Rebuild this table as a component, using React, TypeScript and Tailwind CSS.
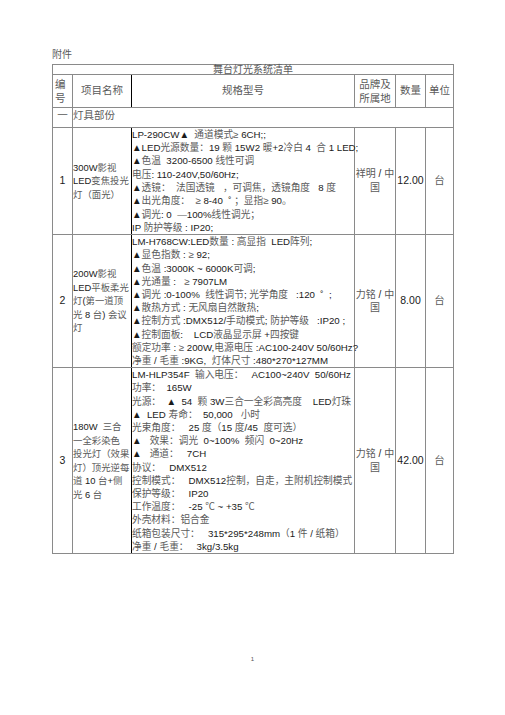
import React from "react";

const GRAY = /([\u2014\u2265\u2103\u3000-\u303f\u4e00-\u9fff\uff00-\uffef]+)/;

// CJK runs render lighter than the latin ones in the scan
function Txt({ s }: { s: string }) {
  return (
    <>
      {s.split(GRAY).map((part, i) =>
        GRAY.test(part) ? (
          <span key={i} className="text-[#5a5a5a]">
            {part}
          </span>
        ) : (
          <span key={i}>{part}</span>
        )
      )}
    </>
  );
}

function Lines({ lines }: { lines: string[] }) {
  return (
    <>
      {lines.map((l, i) => (
        <div key={i} className="whitespace-pre">
          <Txt s={l} />
        </div>
      ))}
    </>
  );
}

const rows = [
  {
    no: "1",
    name: ["300W影视", "LED变焦投光", "灯（面光）"],
    spec: [
      "LP-290CW▲  通道模式≥ 6CH;;",
      "▲LED光源数量：19 颗 15W2 暖+2冷白 4  合 1 LED;",
      "▲色温  3200-6500 线性可调",
      "电压: 110-240V,50/60Hz;",
      "▲透镜：  法国透镜   ，可调焦，透镜角度   8 度",
      "▲出光角度：  ≥ 8-40  ˚ ；显指≥ 90。",
      "▲调光: 0  —100%线性调光；",
      "IP 防护等级 : IP20;",
    ],
    brand: ["祥明 / 中", "国"],
    qty: "12.00",
    lead: "leading-[13.3px]",
  },
  {
    no: "2",
    name: ["200W影视", "LED平板柔光", "灯(第一道顶", "光 8 台) 会议", "灯"],
    spec: [
      "LM-H768CW:LED数量 : 高显指  LED阵列;",
      "▲显色指数 : ≥ 92;",
      "▲色温 :3000K ~ 6000K可调;",
      "▲光通量 :   ≥ 7907LM",
      "▲调光 :0-100%  线性调节; 光学角度   :120  ˚  ;",
      "▲散热方式 : 无风扇自然散热;",
      "▲控制方式 :DMX512/手动模式; 防护等级   :IP20 ;",
      "▲控制面板:    LCD液晶显示屏 +四按键",
      "额定功率 : ≥ 200W,电源电压 :AC100-240V 50/60Hz?",
      "净重 / 毛重 :9KG,  灯体尺寸 :480*270*127MM",
    ],
    brand: ["力铭 / 中", "国"],
    qty: "8.00",
    lead: "leading-[13.2px]",
  },
  {
    no: "3",
    name: ["180W  三合", "一全彩染色", "投光灯（效果", "灯）顶光逆每", "道 10 台+侧", "光 6 台"],
    spec: [
      "LM-HLP354F  输入电压：   AC100~240V  50/60Hz",
      "功率：  165W",
      "光源：  ▲  54  颗 3W三合一全彩高亮度    LED灯珠",
      "▲  LED 寿命：  50,000   小时",
      "光束角度：   25 度（15 度/45  度可选）",
      "▲   效果：调光  0~100%  频闪  0~20Hz",
      "▲   通道：   7CH",
      "协议：   DMX512",
      "控制模式：   DMX512控制，自走，主附机控制模式",
      "保护等级：   IP20",
      "工作温度：   -25 ℃ ~ +35 ℃",
      "外壳材料：铝合金",
      "纸箱包装尺寸：   315*295*248mm（1 件 / 纸箱）",
      "净重 / 毛重：   3kg/3.5kg",
    ],
    brand: ["力铭 / 中", "国"],
    qty: "42.00",
    lead: "leading-[13.2px]",
  },
];

const cell = "border border-[#8a8a8a] p-0";

export default function App() {
  return (
    <div
      className="flex h-[715px] w-[505px] flex-col bg-white text-[9.7px] text-[#1a1a1a]"
      style={{ fontFamily: '"Liberation Sans", "Noto Sans CJK SC", sans-serif' }}
    >
      <div className="pl-[52px] pt-[48px] text-[10px] leading-[14px] text-[#5a5a5a]">附件</div>

      <table className="ml-[52px] mt-[2px] w-[401px] table-fixed border-collapse">
        <colgroup>
          <col className="w-[20px]" />
          <col className="w-[59px]" />
          <col className="w-[223px]" />
          <col className="w-[41px]" />
          <col className="w-[30px]" />
          <col className="w-[28px]" />
        </colgroup>
        <tbody>
          <tr className="h-[10px]">
            <td colSpan={6} className={`${cell} h-[10px] text-center text-[10px] leading-[8px] text-[#5a5a5a]`}>
              舞台灯光系统清单
            </td>
          </tr>
          <tr className="h-[33px] text-[10.5px] text-[#5a5a5a]">
            <td className={`${cell} pl-[2px] leading-[14px]`}>
              编<br />号
            </td>
            <td className={`${cell} border-r-black text-center`}>项目名称</td>
            <td className={`${cell} border-l-black text-center`}>规格型号</td>
            <td className={`${cell} text-center leading-[14px]`}>
              品牌及<br />所属地
            </td>
            <td className={`${cell} text-center`}>数量</td>
            <td className={`${cell} text-center`}>单位</td>
          </tr>
          <tr className="h-[17px] text-[10.5px] text-[#5a5a5a]">
            <td className={`${cell} pb-[3px] text-center align-middle`}>一</td>
            <td colSpan={5} className={`${cell} pb-[3px] align-middle`}>
              灯具部份
            </td>
          </tr>
          {rows.map((r) => (
            <tr key={r.no}>
              <td className={`${cell} text-center align-middle text-[10.5px]`}>{r.no}</td>
              <td className={`${cell} border-r-black align-middle text-[9.4px] leading-[13.5px]`}>
                <Lines lines={r.name} />
              </td>
              <td className={`${cell} border-l-black align-top ${r.lead}`}>
                <Lines lines={r.spec} />
              </td>
              <td className={`${cell} text-center align-middle text-[10px] leading-[13.5px]`}>
                <Lines lines={r.brand} />
              </td>
              <td className={`${cell} text-center align-middle text-[10.5px]`}>{r.qty}</td>
              <td className={`${cell} text-center align-middle text-[10.5px] text-[#5a5a5a]`}>台</td>
            </tr>
          ))}
        </tbody>
      </table>

      <div className="mt-auto pb-[52px] text-center text-[6px] leading-[8px] text-[#555]">1</div>
    </div>
  );
}
